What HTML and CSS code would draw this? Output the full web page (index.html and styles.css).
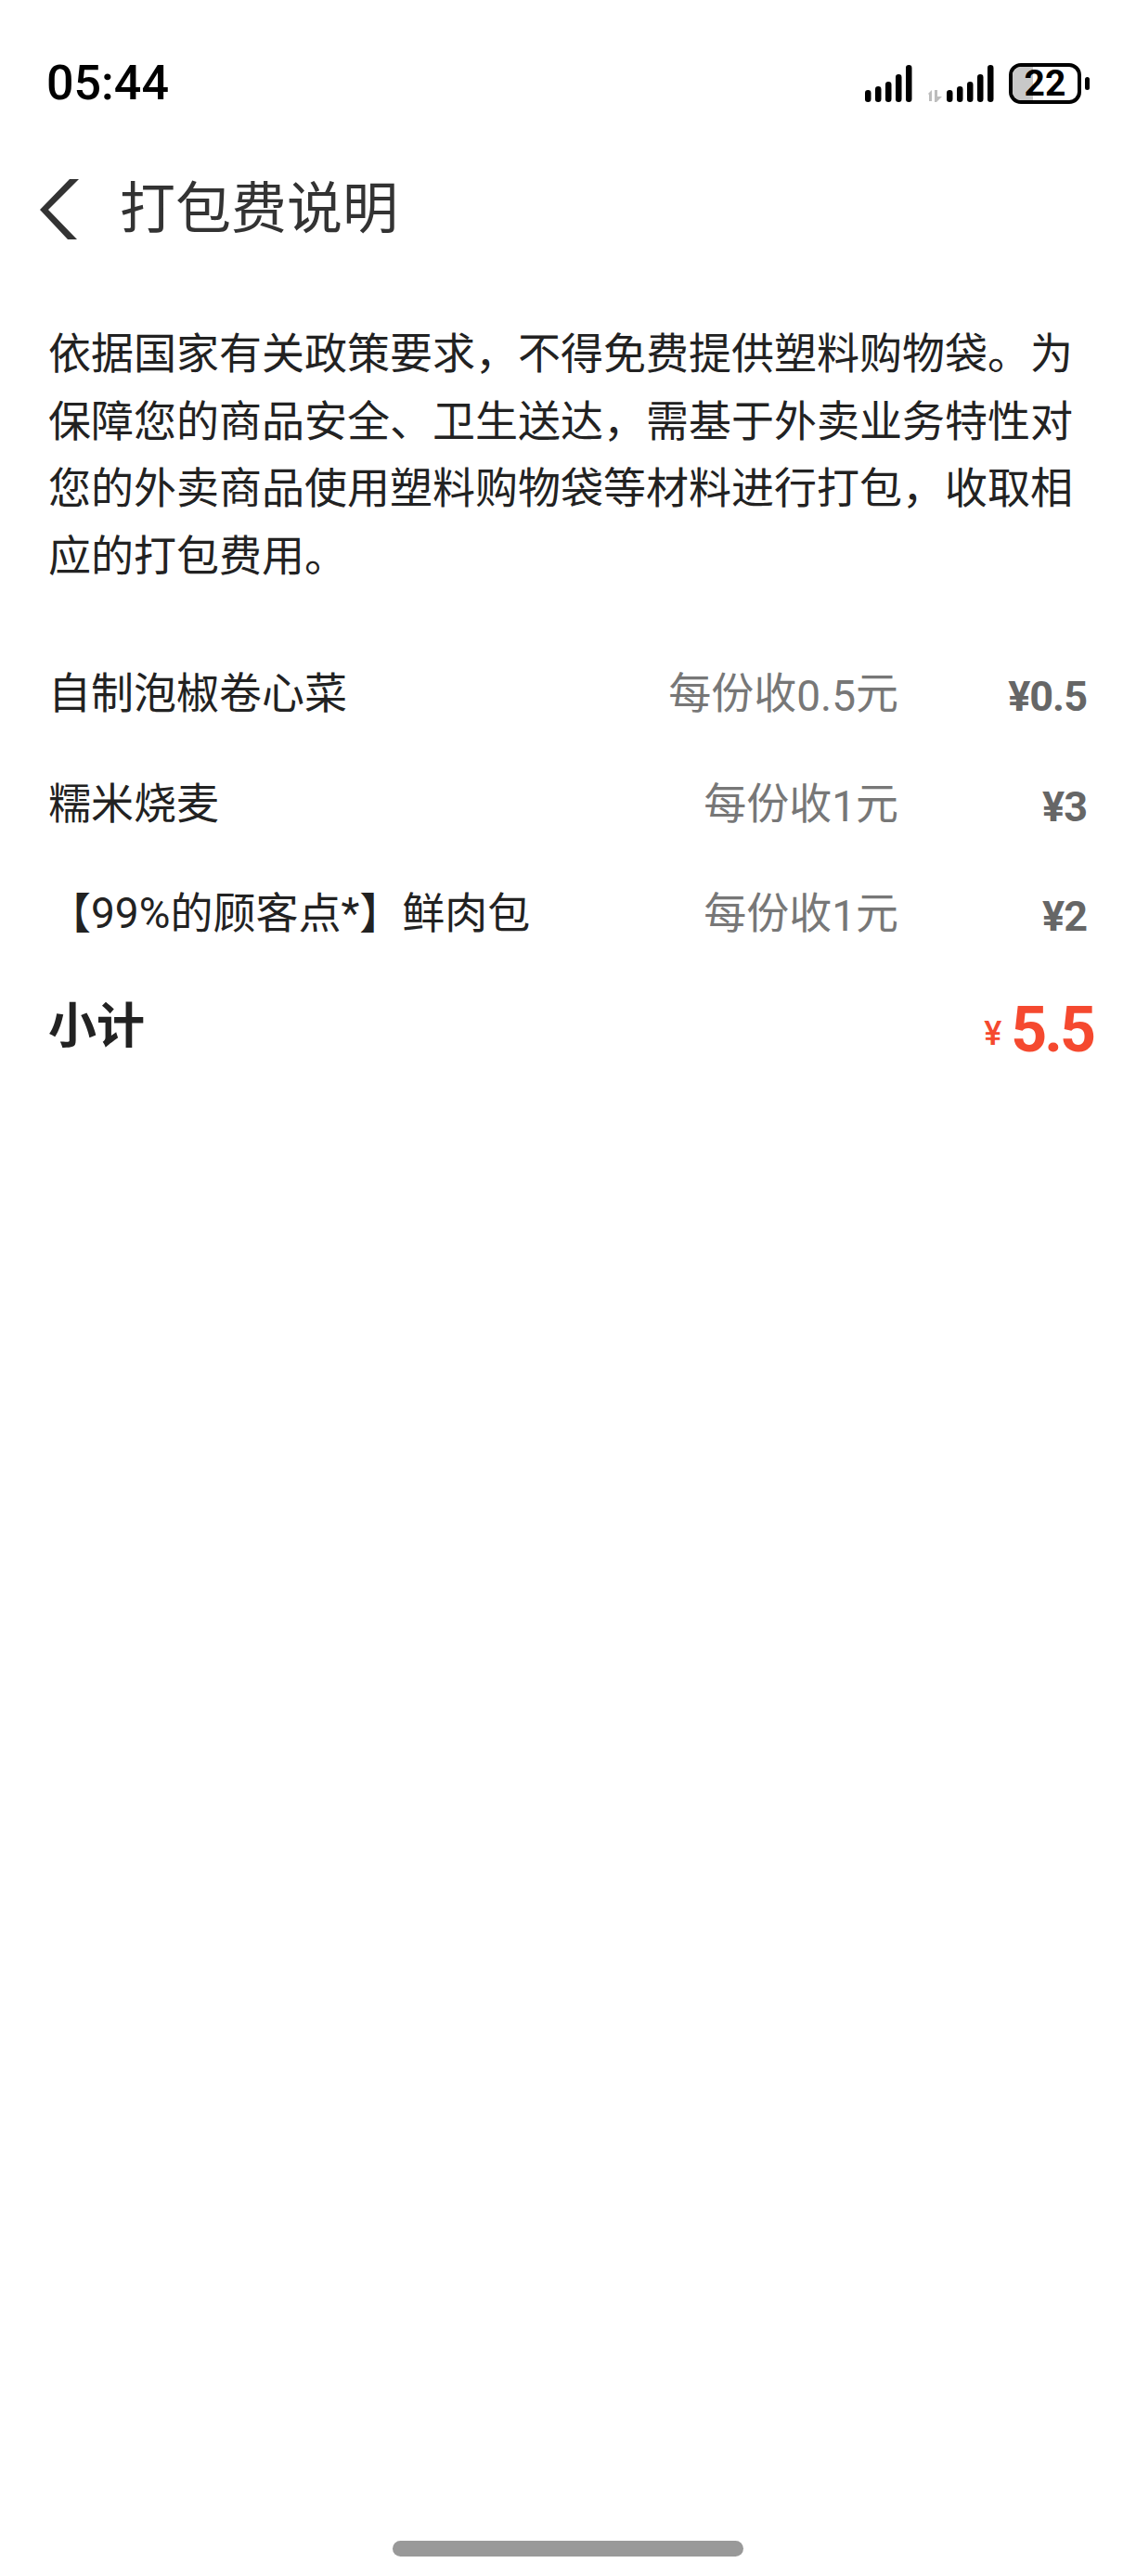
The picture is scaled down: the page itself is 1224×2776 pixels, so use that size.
FILE: index.html
```html
<!DOCTYPE html>
<html lang="zh-CN">
<head>
    <meta charset="UTF-8">
    <meta name="viewport" content="width=device-width, initial-scale=1.0">
    <title>打包费说明</title>
    <link rel="stylesheet" href="styles.css">
</head>
<body>

    <div class="page">
        <!-- 状态栏 -->
        <div class="status-bar">
            <span class="time">05:44</span>
            <div class="status-icons">
                <svg class="signal" width="60" height="42" viewBox="0 0 60 42">
                    <rect x="0" y="28" width="6.5" height="13" rx="3.2"/>
                    <rect x="11" y="24" width="6.5" height="17" rx="3.2"/>
                    <rect x="22" y="19" width="6.5" height="22" rx="3.2"/>
                    <rect x="33" y="11" width="6.5" height="30" rx="3.2"/>
                    <rect x="44" y="1" width="6.5" height="40" rx="3.2"/>
                </svg>
                <svg class="signal-data" width="72" height="42" viewBox="0 0 72 42">
                    <path class="arrows" d="M1 32 L5 28 L5 40 L2 40 L2 33 Z M8 28 L11 28 L11 35 L16 35 L10 41 L8 41 Z"/>
                    <rect x="21" y="28" width="6.5" height="13" rx="3.2"/>
                    <rect x="32" y="24" width="6.5" height="17" rx="3.2"/>
                    <rect x="43" y="19" width="6.5" height="22" rx="3.2"/>
                    <rect x="54" y="11" width="6.5" height="30" rx="3.2"/>
                    <rect x="65" y="1" width="6.5" height="40" rx="3.2"/>
                </svg>
                <div class="battery">
                    <div class="battery-body">
                        <div class="battery-fill"></div>
                        <span class="battery-num">22</span>
                    </div>
                    <div class="battery-cap"></div>
                </div>
            </div>
        </div>

        <!-- 标题 -->
        <div class="header">
            <svg class="back" width="48" height="72" viewBox="0 0 48 72">
                <path d="M47 3 L37 3 L5 36 L35 68 L45 68 L14 36 Z" fill="#333"/>
            </svg>
            <h1>打包费说明</h1>
        </div>

        <p class="desc">依据国家有关政策要求，不得免费提供塑料购物袋。为保障您的商品安全、卫生送达，需基于外卖业务特性对您的外卖商品使用塑料购物袋等材料进行打包，收取相应的打包费用。</p>

        <div class="list">
            <div class="item">
                <span class="item-name">自制泡椒卷心菜</span>
                <span class="item-rule">每份收<span class="rule-num">0.5</span>元</span>
                <span class="item-price">¥0.5</span>
            </div>
            <div class="item">
                <span class="item-name">糯米烧麦</span>
                <span class="item-rule">每份收<span class="rule-num">1</span>元</span>
                <span class="item-price">¥3</span>
            </div>
            <div class="item">
                <span class="item-name">【99%的顾客点*】鲜肉包</span>
                <span class="item-rule">每份收<span class="rule-num">1</span>元</span>
                <span class="item-price">¥2</span>
            </div>
        </div>

        <div class="total">
            <span class="total-label">小计</span>
            <span class="total-price"><span class="total-sign">¥</span>5.5</span>
        </div>

        <div class="home-bar"></div>
    </div>

</body>
</html>
```

FILE: styles.css
```css
body {
    font-family: Roboto, "Noto Sans CJK SC", sans-serif;
    background-color: #ffffff;
    margin: 0;
    padding: 0;
}

.page {
    height: 2776px;
    display: flex;
    flex-direction: column;
    overflow: hidden;
}

.status-bar {
    display: flex;
    justify-content: space-between;
    align-items: center;
    height: 62px;
    padding: 59px 50px 0 50px;
}

.time {
    font-size: 52px;
    font-weight: 500;
    color: #000;
    line-height: 62px;
}

.status-icons {
    display: flex;
    align-items: center;
    gap: 16px;
}

.signal rect,
.signal-data rect {
    fill: #000;
}

.signal {
    margin-right: -9px;
}

.signal-data .arrows {
    fill: #bdbdbd;
}

.battery {
    display: flex;
    align-items: center;
    gap: 4px;
}

.battery-body {
    position: relative;
    box-sizing: border-box;
    width: 78px;
    height: 44px;
    border: 4px solid #000;
    border-radius: 13px;
    overflow: hidden;
    display: flex;
    justify-content: center;
    align-items: center;
}

.battery-fill {
    position: absolute;
    left: 0;
    top: 0;
    bottom: 0;
    width: 22px;
    background-color: #c8c8c8;
}

.battery-num {
    position: relative;
    font-size: 39px;
    font-weight: 700;
    color: #000;
    line-height: 36px;
}

.battery-cap {
    width: 5px;
    height: 14px;
    background-color: #000;
    border-radius: 3px;
}

.header {
    display: flex;
    align-items: center;
    margin-top: 69px;
    padding-left: 38px;
    height: 72px;
}

.back {
    flex-shrink: 0;
}

h1 {
    margin: 0 0 0 43px;
    font-size: 60px;
    font-weight: 400;
    color: #333;
    line-height: 72px;
}

.desc {
    margin: 83px 0 0 0;
    padding: 0 52px;
    font-size: 46px;
    line-height: 72.6px;
    color: #222;
}

.list {
    margin-top: 53px;
}

.item {
    display: grid;
    grid-template-columns: 1fr auto 203px;
    align-items: start;
    height: 118.5px;
    padding: 0 53px 0 52px;
    line-height: 118.5px;
}

.item-name {
    font-size: 46px;
    color: #222;
}

.item-rule {
    font-size: 46px;
    color: #777;
}

.rule-num {
    vertical-align: -2.5px;
}

.item-price {
    padding-top: 4px;
    font-size: 45px;
    font-weight: 700;
    letter-spacing: -1px;
    color: #666;
    text-align: right;
}

.total {
    display: flex;
    justify-content: space-between;
    align-items: center;
    height: 126px;
    padding: 0 46px 0 52px;
}

.total-label {
    margin-bottom: 10px;
    font-size: 52px;
    font-weight: 700;
    color: #222;
}

.total-price {
    margin-top: 6px;
    font-size: 68px;
    font-weight: 700;
    letter-spacing: -3px;
    color: #f5492f;
}

.total-sign {
    font-size: 36px;
    font-weight: 500;
    letter-spacing: 0;
    margin-right: 10px;
    vertical-align: 7px;
}

.home-bar {
    width: 378px;
    height: 17px;
    margin: auto auto 21px auto;
    background-color: #999;
    border-radius: 9px;
}
```
